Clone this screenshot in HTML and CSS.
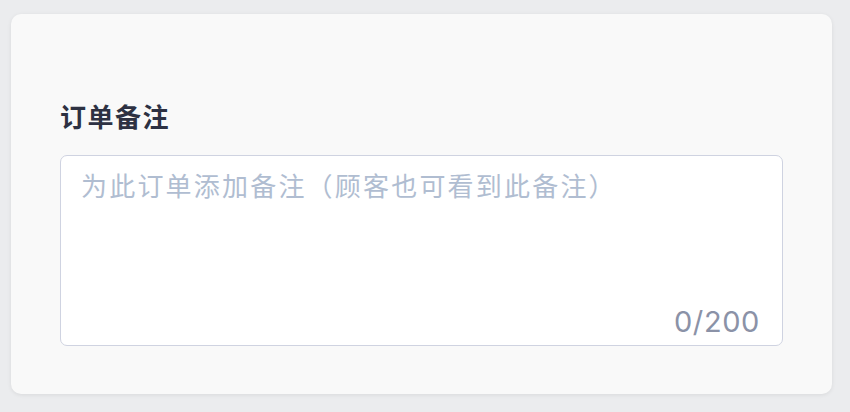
FILE: index.html
```html
<!DOCTYPE html>
<html lang="zh-CN">
<head>
  <meta charset="UTF-8" />
  <meta name="viewport" content="width=device-width, initial-scale=1.0" />
  <title>订单备注</title>
  <link rel="stylesheet" href="styles.css">
</head>
<body>
  <div class="card">
    <label class="note-label" for="orderNote">订单备注</label>
    <div class="note-box">
      <textarea id="orderNote" maxlength="200" placeholder="为此订单添加备注（顾客也可看到此备注）"></textarea>
      <span class="note-count" id="noteCount">0/200</span>
    </div>
  </div>

  <script>
    const note = document.getElementById('orderNote');
    const count = document.getElementById('noteCount');
    note.addEventListener('input', () => {
      count.textContent = note.value.length + '/200';
    });
  </script>
</body>
</html>
```

FILE: styles.css
```css
body {
  margin: 0;
  background: #ebecee;
  font-family: "Noto Sans CJK SC", "Noto Sans", sans-serif;
}
.card {
  margin: 14px 18px 19px 11px;
  padding: 84px 49px 48px 49px;
  background: #f9f9f9;
  border-radius: 10px;
  box-shadow: 0 1px 4px rgba(0, 0, 0, 0.08);
}
.note-label {
  display: block;
  font-size: 26px;
  letter-spacing: 1.5px;
  line-height: 36px;
  font-weight: 600;
  color: #2d3142;
  margin-bottom: 21px;
}
.note-box {
  position: relative;
}
.note-box textarea {
  display: block;
  box-sizing: border-box;
  width: 100%;
  height: 191px;
  padding: 10px 20px;
  border: 1.5px solid #cfd3e1;
  border-radius: 7px;
  background: #fff;
  resize: none;
  outline: none;
  font-family: "Noto Sans CJK SC", sans-serif;
  font-size: 26px;
  letter-spacing: 2.2px;
  line-height: 38px;
  color: #2d3142;
}
.note-box textarea::placeholder {
  color: #b0bdd1;
}
.note-count {
  position: absolute;
  right: 23px;
  bottom: 7px;
  font-family: Inter, "Noto Sans", sans-serif;
  font-size: 29px;
  letter-spacing: 0.6px;
  color: #8b92a7;
}
```
